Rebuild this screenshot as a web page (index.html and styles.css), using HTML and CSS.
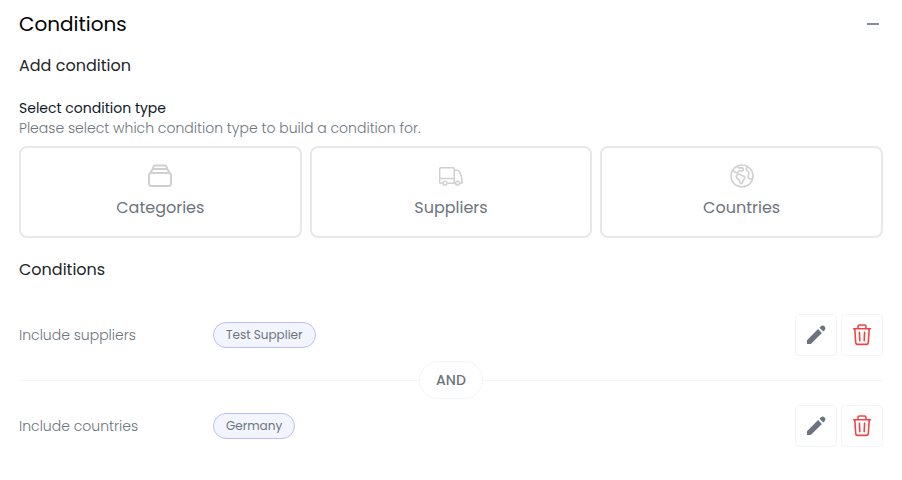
FILE: index.html
```html
<!DOCTYPE html>
<html lang="en">
<head>
    <meta charset="UTF-8">
    <meta name="viewport" content="width=device-width, initial-scale=1.0">
    <title>Conditions</title>
    <link rel="stylesheet" href="styles.css">
</head>
<body>
    <!-- Shared icons -->
    <svg class="sprite" aria-hidden="true">
        <symbol id="pencil" viewBox="0 0 24 24">
            <path fill="currentColor" d="M3 17.2V21h3.8L17.9 9.9l-3.8-3.8L3 17.2z M15.5 4.7l1.5-1.5a2.7 2.7 0 0 1 3.8 3.8l-1.5 1.5z"/>
        </symbol>
        <symbol id="trash" viewBox="0 0 24 24">
            <path fill="none" stroke="currentColor" stroke-width="1.6" stroke-linecap="round" stroke-linejoin="round" d="M3.7 5.8h16.8M8 5.5V3.4c0-.8.6-1.4 1.4-1.4h5.2c.8 0 1.4.6 1.4 1.4v2.1M4.8 6l.9 13.6c.1 1 .9 1.8 1.9 1.8h8.8c1 0 1.8-.8 1.9-1.8L19.2 6M9.4 9.2l.4 8.6M14.6 9.2l-.4 8.6"/>
        </symbol>
    </svg>

    <main class="panel">
        <header class="panel-header">
            <h1>Conditions</h1>
            <button type="button" class="collapse-btn" aria-label="Collapse"><span class="minus"></span></button>
        </header>

        <h2>Add condition</h2>

        <section class="type-select" aria-labelledby="typeLabel">
            <h3 id="typeLabel">Select condition type</h3>
            <p>Please select which condition type to build a condition for.</p>
            <div class="type-grid">
                <button type="button" class="type-card">
                    <svg class="icon" viewBox="0 0 24 24" fill="none" stroke="currentColor" stroke-width="2" stroke-linejoin="round" aria-hidden="true">
                        <rect x="1" y="9" width="22" height="13" rx="2.5"/>
                        <path d="M2 9.6l2.3-3.9c.3-.5.7-.7 1.2-.7h13c.5 0 .9.2 1.2.7L22 9.6M4.6 5l.9-2.5c.2-.6.7-1 1.3-1h10.4c.6 0 1.1.4 1.3 1l.9 2.5"/>
                    </svg>
                    Categories
                </button>
                <button type="button" class="type-card">
                    <svg class="icon" viewBox="0 0 24 24" fill="none" stroke="currentColor" stroke-width="1.5" stroke-linejoin="round" aria-hidden="true">
                        <path d="M3.8 19.3H1.9c-.7 0-1.2-.5-1.2-1.2V5c0-.7.5-1.2 1.2-1.2h12.2c.7 0 1.2.5 1.2 1.2v14.3H8.1M.7 14.5h14.6M15.3 6.3h2.4c1.3 0 2.4.7 3 1.9 1.2 2.4 2.3 5.8 2.5 9.9 0 .7-.5 1.2-1.2 1.2h-1.3M15.3 19.3h1"/>
                        <circle cx="6" cy="19.2" r="1.9"/>
                        <circle cx="18.6" cy="19.2" r="1.9"/>
                    </svg>
                    Suppliers
                </button>
                <button type="button" class="type-card">
                    <svg class="icon" viewBox="0 0 24 24" fill="none" stroke="currentColor" stroke-width="1.6" stroke-linejoin="round" stroke-linecap="round" aria-hidden="true">
                        <circle cx="12" cy="12" r="11"/>
                        <path d="M2.6 6.6l3 1.9c1 .6 2 .4 2.5-.5.4-.7.9-1 1.7-1h2c1 0 1.7-.7 1.7-1.6S12.800 3.900 11.900 3.900H9.300C8.200 3.900 7.500 3 7.700 1.900M6.300 12.700c0-1.500 1.200-2.600 2.800-2.500 1.700.1 2.200 1.400 3.600 1.700 1.500.3 2.300 1.200 2 2.400-.3 1.100-1.300 1.400-1.700 2.500-.5 1.300-.6 2.900-1.900 2.900-1.400 0-1.200-1.900-1.600-3.100-.4-1.300-3.200-1.700-3.200-3.900zM17.500 2.500c-1.200 1.300-1.500 2.800-.7 4 .8 1.100 2.200 1.200 2.200 2.800 0 1.500-1.100 2.200-.9 3.600.1 1.300 1.500 2 3.600 2.200"/>
                    </svg>
                    Countries
                </button>
            </div>
        </section>

        <h2>Conditions</h2>

        <section class="condition-list">
            <div class="condition">
                <span class="condition-name">Include suppliers</span>
                <div class="tags"><span class="tag">Test Supplier</span></div>
                <div class="actions">
                    <button type="button" class="action-btn" aria-label="Edit suppliers"><svg class="icon"><use href="#pencil"/></svg></button>
                    <button type="button" class="action-btn delete" aria-label="Delete suppliers"><svg class="icon"><use href="#trash"/></svg></button>
                </div>
            </div>

            <div class="divider"><span>AND</span></div>

            <div class="condition">
                <span class="condition-name">Include countries</span>
                <div class="tags"><span class="tag">Germany</span></div>
                <div class="actions">
                    <button type="button" class="action-btn" aria-label="Edit countries"><svg class="icon"><use href="#pencil"/></svg></button>
                    <button type="button" class="action-btn delete" aria-label="Delete countries"><svg class="icon"><use href="#trash"/></svg></button>
                </div>
            </div>
        </section>
    </main>
</body>
</html>
```
FILE: styles.css
```css
* {
    box-sizing: border-box;
}
body {
    margin: 0;
    background-color: #fff;
    color: #6c757d;
    font-family: Poppins, Inter, sans-serif;
    font-size: 14px;
    line-height: 20px;
}
h1, h2, h3, p {
    margin: 0;
}
button {
    font: inherit;
    color: inherit;
    background: none;
    cursor: pointer;
}
.sprite {
    display: none;
}
.icon {
    display: block;
    width: 24px;
    height: 24px;
}
.panel {
    padding: 9px 19px 32px;
}
.panel-header {
    display: flex;
    justify-content: space-between;
    align-items: center;
    margin-bottom: 15px;
}
h1 {
    color: #000;
    font-size: 20px;
    font-weight: 400;
    line-height: 30px;
}
h2 {
    color: #212529;
    font-size: 16px;
    font-weight: 400;
    line-height: 24px;
}
h3 {
    color: #111827;
    font-size: 14px;
    font-weight: 400;
    line-height: 20px;
}
.collapse-btn {
    padding: 8px 4px;
    border: none;
}
.minus {
    display: block;
    width: 12px;
    height: 2px;
    background-color: #858a9c;
}
.type-select {
    margin: 20px 0;
}
.type-select p {
    font-weight: 300;
}
.type-grid {
    display: grid;
    grid-template-columns: repeat(3, 1fr);
    gap: 8px;
    margin-top: 8px;
}
.type-card {
    display: flex;
    flex-direction: column;
    align-items: center;
    gap: 8px;
    padding: 16px;
    border: 2px solid #e8e8e8;
    border-radius: 8px;
    font-size: 16px;
    line-height: 24px;
}
.type-card .icon {
    color: #d0d0d0;
}
.condition-list {
    margin-top: 32px;
}
.condition {
    display: flex;
    align-items: center;
}
.condition-name {
    width: 194px;
    font-weight: 300;
}
.tags {
    flex: 1;
    display: flex;
    gap: 8px;
}
.tag {
    padding: 3px 12px;
    border: 1px solid #b9bffb;
    border-radius: 13px;
    background-color: #f2f5fd;
    font-size: 12px;
    line-height: 18px;
}
.actions {
    display: flex;
    gap: 4px;
}
.action-btn {
    padding: 8px;
    border: 1px solid #f3f4f6;
    border-radius: 4px;
    color: #6b7280;
}
.action-btn.delete {
    color: #ef4444;
}
.divider {
    display: flex;
    align-items: center;
    margin: 5px 0 6px;
}
.divider::before,
.divider::after {
    content: "";
    flex: 1;
    height: 1px;
    background-color: #f3f4f6;
}
.divider span {
    padding: 8px 16px;
    border: 1px solid #f3f4f6;
    border-radius: 19px;
    font-weight: 500;
}
```
